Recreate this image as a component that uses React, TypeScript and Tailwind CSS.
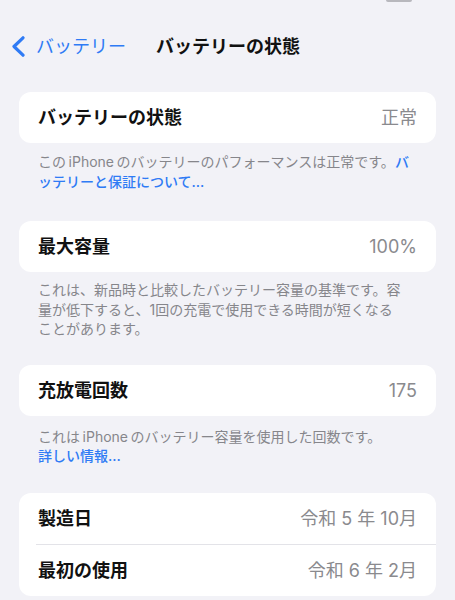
import React from 'react';

const font = { fontFamily: 'Inter, "Noto Sans CJK JP", sans-serif' };

function Row({ label, value }: { label: string; value: string }) {
  return (
    <div className="flex h-[51px] items-center justify-between px-[19px]">
      <span className="text-[18px] font-semibold text-[#111111]">{label}</span>
      <span className="text-[18px] text-[#8a8a8e]">{value}</span>
    </div>
  );
}

function Card({ children }: { children: React.ReactNode }) {
  return <div className="mx-[19px] overflow-hidden rounded-[12px] bg-white">{children}</div>;
}

function Note({ children, className }: { children: React.ReactNode; className: string }) {
  return (
    <p className={`px-[38px] text-[14px] leading-[19.5px] text-[#86868b] ${className}`}>
      {children}
    </p>
  );
}

export default function App() {
  return (
    <div className="relative min-h-screen bg-[#f2f2f7]" style={font}>
      {/* status bar fragment */}
      <div className="absolute top-0 left-[386px] h-[2px] w-[26px] rounded-b-sm bg-[#b8b8bd]" />

      {/* Nav */}
      <div className="flex h-[92px] items-center pl-[11px]">
        <div className="flex items-center gap-[11px] text-[#2f7bf5]">
          <svg width="14" height="21" viewBox="0 0 14 21" fill="none">
            <path d="M12 1.8 L3 10.5 L12 19.2" stroke="#2f7bf5" strokeWidth="3.2" strokeLinecap="round" strokeLinejoin="round" />
          </svg>
          <span className="text-[18px]">バッテリー</span>
        </div>
        <span className="ml-[30px] text-[18px] font-bold text-[#111111]">バッテリーの状態</span>
      </div>

      <Card>
        <Row label="バッテリーの状態" value="正常" />
      </Card>
      <Note className="pt-[9px] pb-[30px]">
        この{'\u2009'}iPhone{'\u2009'}のバッテリーのパフォーマンスは正常です。<span className="font-medium text-[#2f7bf5]">バ</span>
        <br />
        <span className="font-medium text-[#2f7bf5]">ッテリーと保証について...</span>
      </Note>

      <Card>
        <Row label="最大容量" value="100%" />
      </Card>
      <Note className="pt-[8px] pb-[26px]">
        これは、新品時と比較したバッテリー容量の基準です。容
        <br />
        量が低下すると、1回の充電で使用できる時間が短くなる
        <br />
        ことがあります。
      </Note>

      <Card>
        <Row label="充放電回数" value="175" />
      </Card>
      <Note className="pt-[11px] pb-[27px]">
        これは{'\u2009'}iPhone{'\u2009'}のバッテリー容量を使用した回数です。
        <br />
        <span className="font-medium text-[#2f7bf5]">詳しい情報...</span>
      </Note>

      <Card>
        <Row label="製造日" value="令和 5 年 10月" />
        <div className="ml-[17px] h-px bg-[#e3e3e8]" />
        <Row label="最初の使用" value="令和 6 年 2月" />
      </Card>
    </div>
  );
}
